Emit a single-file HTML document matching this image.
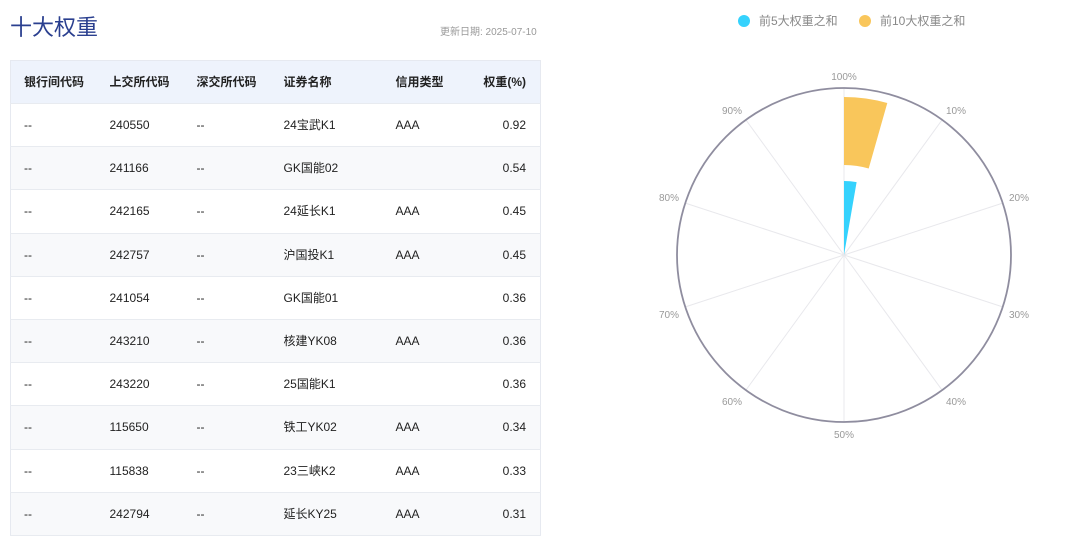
<!DOCTYPE html><html><head><meta charset="utf-8"><style>
body{margin:0;width:1080px;height:546px;background:#fff;font-family:"Liberation Sans","Noto Sans CJK SC",sans-serif;position:relative;overflow:hidden}
.t{position:absolute;left:10px;top:10px;font-size:22px;color:#2a3f8f}
.d{position:absolute;left:440px;top:23px;font-size:10px;color:#999}
table{position:absolute;left:10px;top:60px;width:531px;border-collapse:collapse;border:1px solid #e6e9f0;font-size:12px;color:#222}
td,th{height:42.2px;padding:0;border-bottom:1px solid #e8ebf0;text-align:left;vertical-align:middle;line-height:14px}
td>span{position:relative;top:0}
th{font-weight:600;background:#eef3fc;height:42px;font-size:12px}
tr:nth-child(odd) td{background:#f8f9fb}
td:first-child,th:first-child{padding-left:13px}
td:last-child,th:last-child{text-align:right;padding-right:14px}
</style></head><body>
<div class="t">十大权重</div><div class="d">更新日期: 2025-07-10</div>
<table>
<colgroup><col style="width:99px"><col style="width:87px"><col style="width:87px"><col style="width:112px"><col style="width:70px"><col></colgroup>
<tr><th>银行间代码</th><th>上交所代码</th><th>深交所代码</th><th>证券名称</th><th>信用类型</th><th>权重(%)</th></tr>
<tr><td>--</td><td>240550</td><td>--</td><td><span>24宝武K1</span></td><td>AAA</td><td>0.92</td></tr>
<tr><td>--</td><td>241166</td><td>--</td><td><span>GK国能02</span></td><td></td><td>0.54</td></tr>
<tr><td>--</td><td>242165</td><td>--</td><td><span>24延长K1</span></td><td>AAA</td><td>0.45</td></tr>
<tr><td>--</td><td>242757</td><td>--</td><td><span>沪国投K1</span></td><td>AAA</td><td>0.45</td></tr>
<tr><td>--</td><td>241054</td><td>--</td><td><span>GK国能01</span></td><td></td><td>0.36</td></tr>
<tr><td>--</td><td>243210</td><td>--</td><td><span>核建YK08</span></td><td>AAA</td><td>0.36</td></tr>
<tr><td>--</td><td>243220</td><td>--</td><td><span>25国能K1</span></td><td></td><td>0.36</td></tr>
<tr><td>--</td><td>115650</td><td>--</td><td><span>铁工YK02</span></td><td>AAA</td><td>0.34</td></tr>
<tr><td>--</td><td>115838</td><td>--</td><td><span>23三峡K2</span></td><td>AAA</td><td>0.33</td></tr>
<tr><td>--</td><td>242794</td><td>--</td><td><span>延长KY25</span></td><td>AAA</td><td>0.31</td></tr>
</table>
<svg width="1080" height="546" style="position:absolute;left:0;top:0" font-family="Liberation Sans,Noto Sans CJK SC,sans-serif">
<circle cx="744" cy="21" r="6" fill="#35d2fd"/><text x="759" y="25" font-size="12" fill="#888">前5大权重之和</text>
<circle cx="865" cy="21" r="6" fill="#f9c65b"/><text x="880" y="25" font-size="12" fill="#888">前10大权重之和</text>
<g stroke="#e8e8ec" stroke-width="1">
<line x1="844" y1="255" x2="844" y2="88"/><line x1="844" y1="255" x2="942" y2="120"/><line x1="844" y1="255" x2="1003" y2="203"/><line x1="844" y1="255" x2="1003" y2="307"/><line x1="844" y1="255" x2="942" y2="390"/><line x1="844" y1="255" x2="844" y2="422"/><line x1="844" y1="255" x2="746" y2="390"/><line x1="844" y1="255" x2="685" y2="307"/><line x1="844" y1="255" x2="685" y2="203"/><line x1="844" y1="255" x2="746" y2="120"/>
</g>
<circle cx="844" cy="255" r="167" fill="none" stroke="#8f8d9f" stroke-width="1.8"/>
<path d="M844 255 L844 181 A74 74 0 0 1 856.6 182.1 Z" fill="#35d2fd"/>
<path d="M844 165 L844 97 A158 158 0 0 1 887.3 103 L868.7 168.5 A90 90 0 0 0 844 165 Z" fill="#f9c65b"/>
<g font-size="10" fill="#999" text-anchor="middle">
<text x="844" y="80">100%</text><text x="956" y="114">10%</text><text x="1019" y="201">20%</text><text x="1019" y="318">30%</text><text x="956" y="405">40%</text><text x="844" y="438">50%</text><text x="732" y="405">60%</text><text x="669" y="318">70%</text><text x="669" y="201">80%</text><text x="732" y="114">90%</text>
</g></svg>
</body></html>
